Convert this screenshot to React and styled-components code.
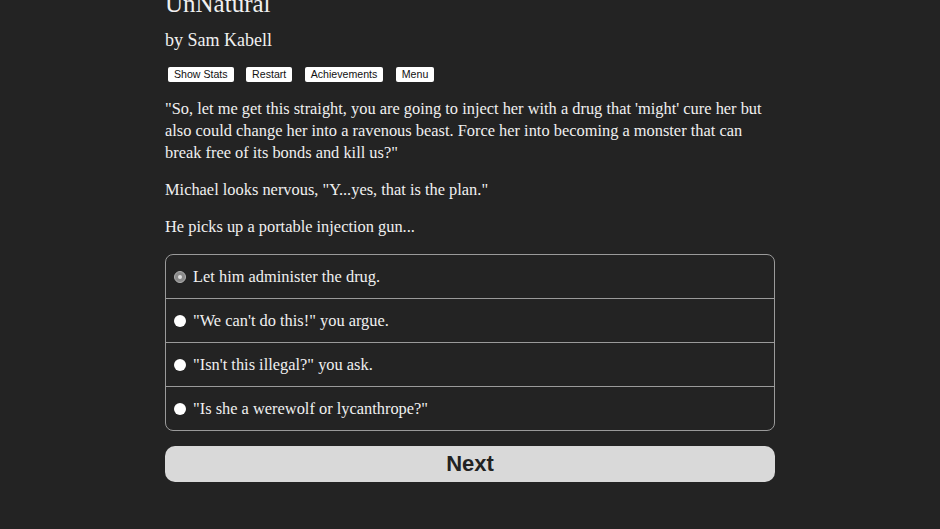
import styled, { createGlobalStyle } from "styled-components";

const GlobalStyle = createGlobalStyle`
  html, body {
    margin: 0;
    padding: 0;
    background: #232323;
  }
  body {
    font-family: "Liberation Serif", "Times New Roman", serif;
    color: #f0f0f0;
    overflow: hidden;
  }
`;

const Page = styled.div`
  width: 610px;
  margin: 0 auto;
`;

const Title = styled.h1`
  margin: -10px 0 0;
  font-size: 25px;
  font-weight: normal;
  line-height: 28px;
`;

const Author = styled.h2`
  margin: 11px 0 0;
  font-size: 18px;
  font-weight: normal;
  line-height: 22px;
`;

const Buttons = styled.div`
  display: flex;
  gap: 12.5px;
  margin: 16px 0 0 3px;
`;

const SmallButton = styled.button`
  font-family: "Liberation Sans", Arial, sans-serif;
  font-size: 10.6px;
  line-height: 13px;
  padding: 1px 6px;
  background: #fff;
  color: #111;
  border: none;
  border-radius: 2px;
`;

const Para = styled.p`
  margin: 15px 0 0;
  font-size: 16.4px;
  line-height: 22px;
  &:first-of-type {
    margin-top: 16px;
  }
`;

const Choices = styled.div`
  margin-top: 16px;
  border: 1px solid #9a9a9a;
  border-radius: 8px;
`;

const Choice = styled.label`
  display: flex;
  align-items: center;
  height: 43px;
  padding-left: 8px;
  font-size: 16.4px;
  border-top: ${(p) => (p.$first ? "none" : "1px solid #9a9a9a")};
`;

const Radio = styled.span`
  width: 12px;
  height: 12px;
  border-radius: 50%;
  margin-right: 7px;
  box-sizing: border-box;
  background: ${(p) => (p.$checked ? "#8a8a8a" : "#fff")};
  border: ${(p) => (p.$checked ? "1px solid #b0b0b0" : "none")};
  display: flex;
  align-items: center;
  justify-content: center;
  &::after {
    content: "";
    width: 4px;
    height: 4px;
    border-radius: 50%;
    background: ${(p) => (p.$checked ? "#e0e0e0" : "transparent")};
  }
`;

const NextButton = styled.button`
  display: block;
  width: 100%;
  margin-top: 15px;
  height: 36px;
  border: none;
  border-radius: 10px;
  background: #d9d9d9;
  color: #222;
  font-family: "Liberation Sans", Arial, sans-serif;
  font-weight: bold;
  font-size: 22px;
`;

const choices = [
  "Let him administer the drug.",
  "\"We can't do this!\" you argue.",
  "\"Isn't this illegal?\" you ask.",
  "\"Is she a werewolf or lycanthrope?\"",
];

const App = () => {
  return (
    <>
      <GlobalStyle />
      <Page>
        <Title>UnNatural</Title>
        <Author>by Sam Kabell</Author>
        <Buttons>
          <SmallButton>Show Stats</SmallButton>
          <SmallButton>Restart</SmallButton>
          <SmallButton>Achievements</SmallButton>
          <SmallButton>Menu</SmallButton>
        </Buttons>
        <Para>
          "So, let me get this straight, you are going to inject her with a drug that 'might' cure her but
          also could change her into a ravenous beast. Force her into becoming a monster that can break
          free of its bonds and kill us?"
        </Para>
        <Para>Michael looks nervous, "Y...yes, that is the plan."</Para>
        <Para>He picks up a portable injection gun...</Para>
        <Choices>
          {choices.map((c, i) => (
            <Choice key={i} $first={i === 0}>
              <Radio $checked={i === 0} />
              {c}
            </Choice>
          ))}
        </Choices>
        <NextButton>Next</NextButton>
      </Page>
    </>
  );
};

export default App;
